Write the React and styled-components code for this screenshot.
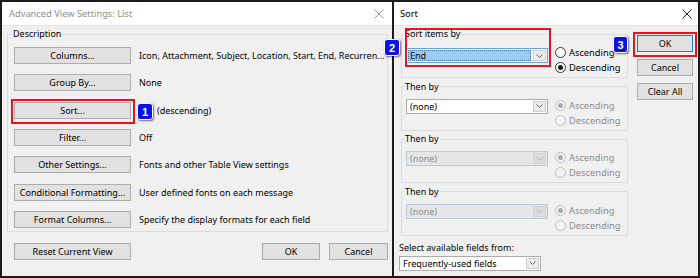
import React from 'react';
import styled, { createGlobalStyle } from 'styled-components';

const Global = createGlobalStyle`
  html, body { margin: 0; padding: 0; background: #fff; }
  body {
    font-family: "Noto Sans", "Open Sans", sans-serif;
    font-size: 9px;
    color: #000;
    -webkit-font-smoothing: antialiased;
  }
  * { box-sizing: border-box; }
`;

const Frame = styled.div`
  position: relative;
  width: 700px;
  height: 278px;
  border: 2px solid #1c1c1c;
  background: #1c1c1c;
  display: flex;
  gap: 2px;
  overflow: hidden;
`;

const Dialog = styled.section`
  display: flex;
  flex-direction: column;
  width: ${p => p.$w}px;
  flex: ${p => (p.$w ? 'none' : '1')};
  background: #f0f0f0;
`;

const TitleBar = styled.header`
  height: 24px;
  flex: none;
  display: flex;
  align-items: center;
  justify-content: space-between;
  padding: 0 ${p => p.$pr}px 0 ${p => p.$pl}px;
  background: #fff;
  border-bottom: 1px solid #e4e4e4;
  color: ${p => p.$color};
  font-size: 9.3px;
`;

const CloseIcon = ({ color }) => (
  <svg width="10" height="10" viewBox="0 0 10 10">
    <path d="M0.5 0.5 L9.5 9.5 M9.5 0.5 L0.5 9.5" stroke={color} strokeWidth="1" fill="none" />
  </svg>
);

/* ---------- left dialog ---------- */

const LeftBody = styled.div`
  flex: 1;
  display: flex;
  flex-direction: column;
  padding: 1px 4px 0 5px;
`;

const Group = styled.fieldset`
  margin: 0;
  min-width: 0;
  border: 1px solid #dcdcdc;
  padding: ${p => p.$pad};
`;

const Legend = styled.legend`
  padding: 0 1px;
  margin-left: -2px;
  line-height: ${p => p.$lh}px;
  font-size: 9px;
`;

const Rows = styled.div`
  display: flex;
  flex-direction: column;
  gap: 10.33px;
`;

const Row = styled.div`
  display: flex;
  align-items: center;
  gap: 8px;
  height: 17px;
`;

const Button = styled.button`
  width: ${p => p.$w}px;
  height: 17px;
  flex: none;
  padding: 0;
  margin: 0;
  background: #e1e1e1;
  border: 1px solid ${p => (p.$primary ? '#1f7ad4' : '#adadad')};
  font: inherit;
  font-size: 9px;
  color: #000;
  display: flex;
  align-items: center;
  justify-content: center;
  white-space: nowrap;
`;

const Desc = styled.span`
  white-space: nowrap;
  padding-left: ${p => p.$indent || 0}px;
`;

const Footer = styled.div`
  display: flex;
  align-items: center;
  gap: 9px;
  padding: 11px 0 0 7px;
`;

const Spacer = styled.div`
  flex: 1;
`;

/* ---------- right dialog ---------- */

const SortBody = styled.div`
  flex: 1;
  display: flex;
  gap: 9px;
  padding: 2px 5px 0 7px;
`;

const Main = styled.div`
  width: 227px;
  display: flex;
  flex-direction: column;
`;

const Groups = styled.div`
  display: flex;
  flex-direction: column;
  gap: 2.5px;
`;

const GroupRow = styled.div`
  display: flex;
  align-items: flex-start;
  gap: 7px;
`;

const SelectBox = styled.div`
  display: flex;
  flex: none;
  width: ${p => p.$w}px;
  height: 15px;
  margin-top: ${p => p.$mt || 0}px;
  margin-left: ${p => p.$ml || 0}px;
  border: 1px solid ${p => (p.$disabled ? '#b9c8dc' : p.$focus ? '#6aa0dc' : '#acacac')};
  background: ${p => (p.$disabled ? '#e6e6e6' : '#fff')};
`;

const SelectValue = styled.div`
  flex: 1;
  display: flex;
  align-items: center;
  padding: 0 2px;
  margin: 1px;
  color: ${p => (p.$disabled ? '#8a8a8a' : '#000')};
  background: ${p => (p.$selected ? '#9dcbf1' : 'transparent')};
  outline: ${p => (p.$selected ? '1px dotted #3d6fa8' : 'none')};
  outline-offset: -1px;
  white-space: nowrap;
  line-height: 1;
`;

const SelectArrow = styled.div`
  width: 13px;
  flex: none;
  margin: 1px;
  display: flex;
  align-items: center;
  justify-content: center;
  border: 1px solid ${p => (p.$disabled ? '#d2d2d2' : '#cfcfcf')};
  background: ${p => (p.$disabled ? '#dcdcdc' : '#ececec')};
`;

const Chevron = ({ color }) => (
  <svg width="7" height="4" viewBox="0 0 7 4">
    <path d="M0.5 0.5 L3.5 3.5 L6.5 0.5" stroke={color} strokeWidth="1" fill="none" />
  </svg>
);

const Select = ({ w, value, disabled, focus, selected, mt, ml }) => (
  <SelectBox $w={w} $disabled={disabled} $focus={focus} $mt={mt} $ml={ml}>
    <SelectValue $disabled={disabled} $selected={selected}>{value}</SelectValue>
    <SelectArrow $disabled={disabled}>
      <Chevron color={disabled ? '#b0b0b0' : '#5a5a5a'} />
    </SelectArrow>
  </SelectBox>
);

const RadioCol = styled.div`
  display: flex;
  flex-direction: column;
`;

const RadioLabel = styled.label`
  display: flex;
  align-items: center;
  gap: 3px;
  height: 15px;
  color: ${p => (p.$disabled ? '#8c8c8c' : '#000')};
  white-space: nowrap;
  font-size: 9.3px;
`;

const RadioCircle = styled.span`
  width: 11px;
  height: 11px;
  border-radius: 50%;
  border: 1px solid ${p => (p.$disabled ? '#bdbdbd' : '#333')};
  background: ${p => (p.$disabled ? '#f4f4f4' : '#fff')};
  display: flex;
  align-items: center;
  justify-content: center;
  &::after {
    content: '';
    width: 5px;
    height: 5px;
    border-radius: 50%;
    background: ${p => (p.$disabled ? '#a8a8a8' : '#1a1a1a')};
    display: ${p => (p.$checked ? 'block' : 'none')};
  }
`;

const Radio = ({ label, checked, disabled }) => (
  <RadioLabel $disabled={disabled}>
    <RadioCircle $checked={checked} $disabled={disabled} />
    {label}
  </RadioLabel>
);

const FieldLabel = styled.div`
  margin: 6px 0 2px -2px;
  line-height: 12px;
  white-space: nowrap;
`;

const Side = styled.div`
  display: flex;
  flex-direction: column;
  gap: 7px;
  padding-top: 7px;
`;

/* ---------- annotations ---------- */

const Mark = styled.div`
  position: absolute;
  border: 2px solid #e8151d;
  pointer-events: none;
`;

const Badge = styled.div`
  position: absolute;
  display: flex;
  align-items: center;
  justify-content: center;
  background: #0b12e6;
  color: #fff;
  border: 1.5px solid #fff;
  border-radius: 3px;
  box-shadow: 1px 1px 2px rgba(0, 0, 0, 0.55);
  font-family: "Liberation Sans", "Noto Sans", sans-serif;
  font-weight: bold;
  font-size: 11px;
`;

const leftRows = [
  ['Columns...', 'Icon, Attachment, Subject, Location, Start, End, Recurren...'],
  ['Group By...', 'None'],
  ['Sort...', '(descending)', 18],
  ['Filter...', 'Off'],
  ['Other Settings...', 'Fonts and other Table View settings'],
  ['Conditional Formatting...', 'User defined fonts on each message'],
  ['Format Columns...', 'Specify the display formats for each field'],
];

const sortGroups = [
  { title: 'Sort items by', value: 'End', focus: true, selected: true, asc: false },
  { title: 'Then by', value: '(none)', disabled: false, radiosDisabled: true, asc: true },
  { title: 'Then by', value: '(none)', disabled: true, radiosDisabled: true, asc: true },
  { title: 'Then by', value: '(none)', disabled: true, radiosDisabled: true, asc: true },
];

const marks = [
  { l: 9, t: 97, w: 124, h: 25 },
  { l: 403, t: 26, w: 146, h: 39 },
  { l: 631, t: 30, w: 64, h: 25 },
];

const badges = [
  { n: 1, l: 135, t: 101, w: 16, h: 17 },
  { n: 2, l: 382, t: 37, w: 16, h: 17 },
  { n: 3, l: 611, t: 34, w: 15, h: 17 },
];

export default function App() {
  return (
    <>
      <Global />
      <Frame>
        <Dialog $w={390}>
          <TitleBar $pl={7} $pr={8} $color="#8e8e8e">
            <span>Advanced View Settings: List</span>
            <CloseIcon color="#9a9a9a" />
          </TitleBar>
          <LeftBody>
            <Group $pad="6px 4px 3px 6px">
              <Legend $lh={14}>Description</Legend>
              <Rows>
                {leftRows.map(([b, d, indent]) => (
                  <Row key={b}>
                    <Button $w={117}>{b}</Button>
                    <Desc $indent={indent}>{d}</Desc>
                  </Row>
                ))}
              </Rows>
            </Group>
            <Footer>
              <Button $w={117}>Reset Current View</Button>
              <Spacer />
              <Button $w={58}>OK</Button>
              <Button $w={59}>Cancel</Button>
            </Footer>
          </LeftBody>
        </Dialog>

        <Dialog>
          <TitleBar $pl={6} $pr={6} $color="#000">
            <span>Sort</span>
            <CloseIcon color="#222" />
          </TitleBar>
          <SortBody>
            <Main>
              <Groups>
                {sortGroups.map((g, i) => (
                  <Group key={i} $pad="5px 4px 2px 4px">
                    <Legend $lh={12}>{g.title}</Legend>
                    <GroupRow>
                      <Select
                        w={142}
                        mt={g.focus ? 3 : 1}
                        value={g.value}
                        disabled={g.disabled}
                        focus={g.focus}
                        selected={g.selected}
                      />
                      <RadioCol>
                        <Radio label="Ascending" checked={g.asc} disabled={g.radiosDisabled} />
                        <Radio label="Descending" checked={!g.asc} disabled={g.radiosDisabled} />
                      </RadioCol>
                    </GroupRow>
                  </Group>
                ))}
              </Groups>
              <FieldLabel>Select available fields from:</FieldLabel>
              <Select w={142} ml={-2} value="Frequently-used fields" />
            </Main>
            <Side>
              <Button $w={56} $primary>OK</Button>
              <Button $w={56}>Cancel</Button>
              <Button $w={56}>Clear All</Button>
            </Side>
          </SortBody>
        </Dialog>

        {marks.map((m, i) => (
          <Mark key={i} style={{ left: m.l, top: m.t, width: m.w, height: m.h }} />
        ))}
        {badges.map(b => (
          <Badge key={b.n} style={{ left: b.l, top: b.t, width: b.w, height: b.h }}>
            {b.n}
          </Badge>
        ))}
      </Frame>
    </>
  );
}
